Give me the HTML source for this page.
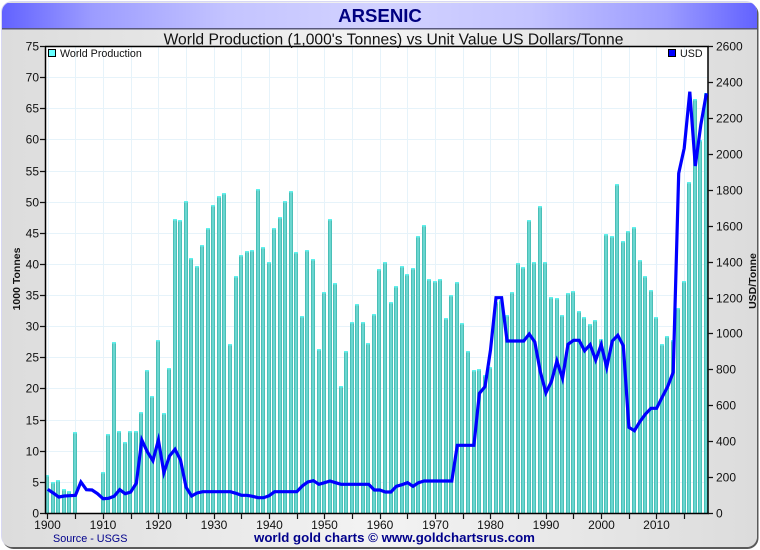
<!DOCTYPE html>
<html><head><meta charset="utf-8"><title>Arsenic</title>
<style>html,body{margin:0;padding:0;background:#fff;width:760px;height:550px;overflow:hidden}svg{display:block}
text{font-family:"Liberation Sans",Arial,sans-serif;fill:#111}</style></head>
<body>
<svg width="760" height="550" viewBox="0 0 760 550" xmlns="http://www.w3.org/2000/svg">
<defs>
<linearGradient id="bg" x1="0" x2="1" y1="0" y2="0"><stop offset="0" stop-color="#dcdcdc"/><stop offset=".5" stop-color="#f3f3f3"/><stop offset="1" stop-color="#dcdcdc"/></linearGradient>
<linearGradient id="tb" x1="0" x2="1" y1="0" y2="0"><stop offset="0" stop-color="#6262ff"/><stop offset=".12" stop-color="#9c9cff"/><stop offset=".3" stop-color="#c4c4ff"/><stop offset=".5" stop-color="#d2d2ff"/><stop offset=".7" stop-color="#c4c4ff"/><stop offset=".88" stop-color="#9c9cff"/><stop offset="1" stop-color="#6262ff"/></linearGradient>
<clipPath id="pc"><rect x="46" y="47" width="662" height="466"/></clipPath>
<clipPath id="card"><rect x="2" y="2" width="755" height="545" rx="10"/></clipPath>
<path id="b" d="M47 475V520M53 482V520M58 480V520M64 489V520M69 491V520M75 432V520M103 472V520M108 434V520M114 342V520M119 431V520M125 442V520M130 431V520M136 431V520M141 412V520M147 370V520M152 396V520M158 340V520M164 413V520M169 368V520M175 219V520M180 220V520M186 201V520M191 258V520M197 266V520M202 245V520M208 228V520M213 205V520M219 196V520M224 193V520M230 344V520M236 276V520M241 255V520M247 251V520M252 250V520M258 189V520M263 247V520M269 262V520M274 228V520M280 217V520M285 201V520M291 191V520M296 252V520M302 316V520M307 250V520M313 259V520M319 349V520M324 292V520M330 219V520M335 283V520M341 386V520M346 351V520M352 322V520M357 304V520M363 322V520M368 343V520M374 314V520M379 269V520M385 262V520M391 302V520M396 286V520M402 266V520M407 274V520M413 268V520M418 236V520M424 225V520M429 279V520M435 281V520M440 279V520M446 318V520M451 295V520M457 282V520M462 323V520M468 351V520M474 370V520M479 369V520M485 375V520M490 367V520M496 302V520M501 300V520M507 315V520M512 292V520M518 263V520M523 267V520M529 220V520M534 262V520M540 206V520M545 262V520M551 297V520M557 298V520M562 315V520M568 293V520M573 291V520M579 311V520M584 317V520M590 324V520M595 320V520M601 339V520M606 234V520M612 236V520M617 184V520M623 241V520M628 231V520M634 227V520M640 260V520M645 276V520M651 290V520M656 317V520M662 344V520M667 336V520M673 340V520M678 308V520M684 281V520M689 182V520M695 99V520M700 140V520M706 93V520"/>
</defs>

<rect x="2.5" y="3" width="756" height="546" rx="11" fill="#5a5a5a"/>
<rect x="1" y="1" width="756" height="546" rx="11" fill="#d8d8f4"/>
<g clip-path="url(#card)">
<rect x="2" y="2" width="755" height="545" fill="url(#bg)"/>
<rect x="2" y="3" width="755" height="25.500" fill="url(#tb)"/>
<rect x="2" y="28" width="755" height="1.500" fill="#58587c"/>
</g>

<rect x="46" y="47" width="662" height="466" fill="#fff"/>
<!-- grid -->
<path stroke="#e6f3fa" stroke-width="1" fill="none" d="M46 77.500H708M46 108.500H708M46 139.500H708M46 171.500H708M46 202.500H708M46 233.500H708M46 264.500H708M46 295.500H708M46 326.500H708M46 357.500H708M46 388.500H708M46 420.500H708M46 451.500H708M46 482.500H708M48.500 47V513M75.500 47V513M103.500 47V513M131.500 47V513M158.500 47V513M186.500 47V513M214.500 47V513M241.500 47V513M269.500 47V513M297.500 47V513M324.500 47V513M352.500 47V513M380.500 47V513M407.500 47V513M435.500 47V513M463.500 47V513M490.500 47V513M518.500 47V513M546.500 47V513M573.500 47V513M601.500 47V513M629.500 47V513M656.500 47V513M684.500 47V513"/>

<!-- bars -->
<g clip-path="url(#pc)" fill="none" shape-rendering="crispEdges">
<use href="#b" stroke="#5ff2ee" stroke-width="4"/>
<use href="#b" stroke="#4abfb7" stroke-width="4" transform="translate(0,1.500)"/>
<use href="#b" stroke="#6ad6d0" stroke-width="2" transform="translate(0,1.500)"/>
</g>

<!-- legend -->
<rect x="48.500" y="49.500" width="7" height="7" fill="#66ffff" stroke="#000" stroke-width="1"/>
<text x="60" y="57" font-size="10.700">World Production</text>
<rect x="668.500" y="49.500" width="7" height="7" fill="#0000ff" stroke="#000" stroke-width="1"/>
<text x="680" y="57" font-size="10.700">USD</text>

<!-- axes -->
<path fill="none" stroke="#000" stroke-width="1.500" d="M45.500 46V514M45 46.500H709M708 46V514M45 513.500H709"/>
<path fill="none" stroke="#111" stroke-width="1.200" d="M40 46.500H45M40 77.500H45M40 108.500H45M40 139.500H45M40 171.500H45M40 202.500H45M40 233.500H45M40 264.500H45M40 295.500H45M40 326.500H45M40 357.500H45M40 388.500H45M40 420.500H45M40 451.500H45M40 482.500H45M40 513.500H45
M708 46.500H713M708 82.500H713M708 118.500H713M708 154.500H713M708 190.500H713M708 226.500H713M708 262.500H713M708 298.500H713M708 333.500H713M708 369.500H713M708 405.500H713M708 441.500H713M708 477.500H713M708 513.500H713
M47.500 513V519M75.500 513V519M103.500 513V519M131.500 513V519M158.500 513V519M186.500 513V519M214.500 513V519M241.500 513V519M269.500 513V519M297.500 513V519M324.500 513V519M352.500 513V519M380.500 513V519M407.500 513V519M435.500 513V519M463.500 513V519M490.500 513V519M518.500 513V519M546.500 513V519M573.500 513V519M601.500 513V519M629.500 513V519M656.500 513V519M684.500 513V519"/>

<!-- USD line -->
<polyline fill="none" stroke="#0000ff" stroke-width="3.200" stroke-linejoin="miter" stroke-miterlimit="6" points="47.700,489.300 53.200,493 58.800,497 64.300,496 69.800,495.700 75.400,495.300 80.900,482 86.400,489.700 92,490 97.500,493.700 103.100,498.700 108.600,498.300 114.100,496.300 119.700,489.700 125.200,493.700 130.700,492 136.300,483.300 141.800,440 147.300,451.700 152.900,460.700 158.400,440 163.900,472.700 169.500,456 175,449.300 180.500,460 186.100,487.300 191.600,496 197.100,493 202.700,491.700 208.200,491.700 213.800,491.700 219.300,491.700 224.800,491.700 230.400,491.700 235.900,493.300 241.400,495.300 247,495.300 252.500,496.300 258,497.700 263.600,497.700 269.100,495.700 274.600,491.700 280.200,491.700 285.700,491.700 291.200,491.700 296.800,491.700 302.300,486 307.800,482 313.400,480.700 318.900,484.300 324.500,482.700 330,481 335.500,482.700 341.100,484.300 346.600,484.300 352.100,484.300 357.700,484.300 363.200,484.300 368.700,484.300 374.300,490 379.800,490 385.300,492 390.900,492 396.400,486.300 401.900,484.700 407.500,482.700 413,486.300 418.500,482.700 424.100,481 429.600,481 435.200,481 440.700,481 446.200,481 451.800,481 457.300,445.300 462.800,445.300 468.400,445.300 473.900,445.300 479.400,393.300 485,386.700 490.500,350 496,297.700 501.600,297.700 507.100,341 512.600,341 518.200,341 523.700,341 529.200,334 534.800,342 540.300,371.700 545.900,392.700 551.400,381.700 556.900,361 562.500,378.300 568,344.300 573.500,340.300 579.100,340.300 584.600,350.700 590.100,344.700 595.700,360 601.200,344.700 606.700,367.300 612.300,341 617.800,335.300 623.300,345.700 628.900,427.300 634.400,430.700 639.900,421.700 645.500,414 651,408.300 656.600,408.300 662.100,397.300 667.600,386.700 673.200,372.300 678.700,173.300 684.200,148.300 689.800,91.700 695.300,166 700.800,125 706.400,93.300"/>

<!-- left labels -->
<g font-size="12" text-anchor="end">
<text x="39" y="50.500">75</text><text x="39" y="81.500">70</text><text x="39" y="112.500">65</text><text x="39" y="143.500">60</text><text x="39" y="175.500">55</text><text x="39" y="206.500">50</text><text x="39" y="237.500">45</text><text x="39" y="268.500">40</text><text x="39" y="299.500">35</text><text x="39" y="330.500">30</text><text x="39" y="361.500">25</text><text x="39" y="392.500">20</text><text x="39" y="424.500">15</text><text x="39" y="455.500">10</text><text x="39" y="486.500">5</text><text x="39" y="517.500">0</text>
</g>
<!-- right labels -->
<g font-size="12">
<text x="716" y="50.500">2600</text><text x="716" y="86.500">2400</text><text x="716" y="122.500">2200</text><text x="716" y="158.500">2000</text><text x="716" y="194.500">1800</text><text x="716" y="230.500">1600</text><text x="716" y="266.500">1400</text><text x="716" y="302.500">1200</text><text x="716" y="337.500">1000</text><text x="716" y="373.500">800</text><text x="716" y="409.500">600</text><text x="716" y="445.500">400</text><text x="716" y="481.500">200</text><text x="716" y="517.500">0</text>
</g>
<!-- x labels -->
<g font-size="12" text-anchor="middle">
<text x="47.500" y="529">1900</text><text x="103" y="529">1910</text><text x="158.500" y="529">1920</text><text x="214" y="529">1930</text><text x="269.500" y="529">1940</text><text x="324.500" y="529">1950</text><text x="380" y="529">1960</text><text x="435.500" y="529">1970</text><text x="490.500" y="529">1980</text><text x="546" y="529">1990</text><text x="601.500" y="529">2000</text><text x="656.500" y="529">2010</text>
</g>

<!-- titles -->
<text x="380" y="22" font-size="18.600" font-weight="bold" text-anchor="middle" style="fill:#000080">ARSENIC</text>
<text x="393.500" y="44.500" font-size="15.630" text-anchor="middle">World Production (1,000's Tonnes) vs Unit Value US Dollars/Tonne</text>
<text x="53" y="542" font-size="10.800" style="fill:#00008b">Source - USGS</text>
<text x="394.500" y="542" font-size="13.250" font-weight="bold" text-anchor="middle" style="fill:#00008b">world gold charts © www.goldchartsrus.com</text>
<text transform="translate(20,279) rotate(-90)" font-size="10.500" font-weight="bold" text-anchor="middle">1000 Tonnes</text>
<text transform="translate(756,281) rotate(-90)" font-size="10.500" font-weight="bold" text-anchor="middle">USD/Tonne</text>
</svg>
</body></html>
